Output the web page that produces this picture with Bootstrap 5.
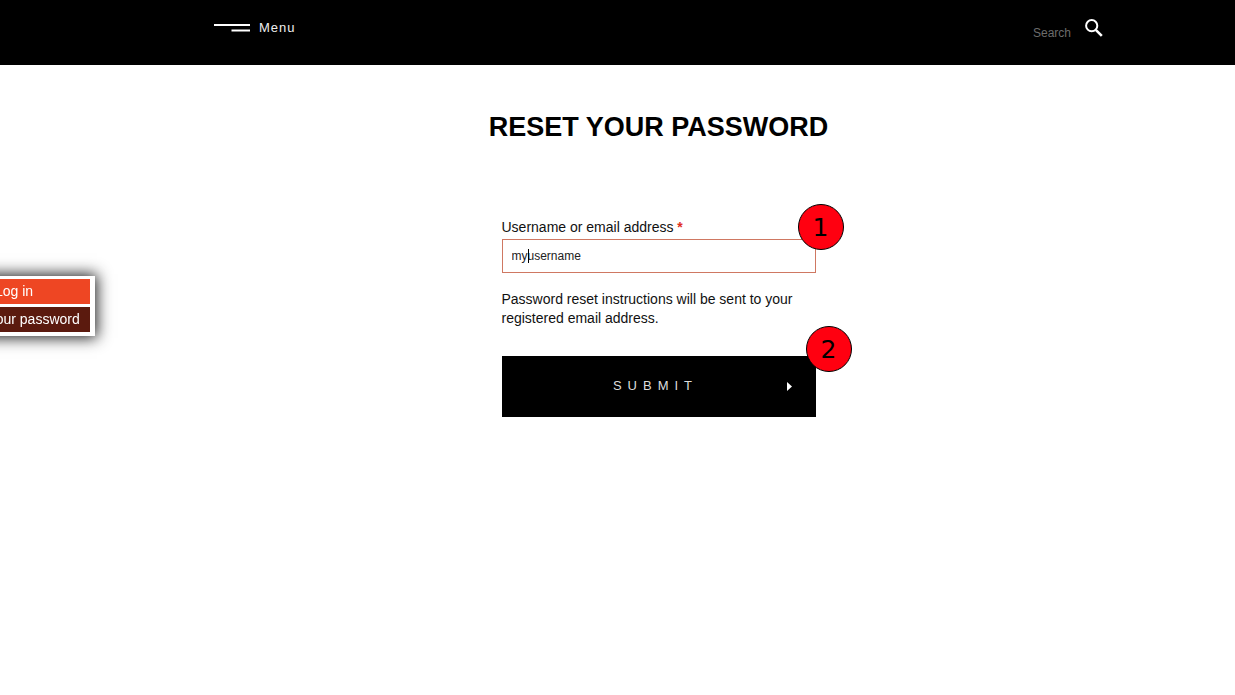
<!DOCTYPE html>
<html lang="en">
<head>
<meta charset="utf-8">
<meta name="viewport" content="width=device-width, initial-scale=1">
<title>Reset your password</title>
<link href="https://cdn.jsdelivr.net/npm/bootstrap@5.3.0/dist/css/bootstrap.min.css" rel="stylesheet">
<style>
  body { font-family: "Liberation Sans", Arial, sans-serif; font-size: 14px; line-height: 19px; color: #111; background: #fff; }
  .site-header, .page-main { padding-left: 82px; }
  .site-header { background: #000; height: 65px; }
  .header-inner { max-width: 889px; height: 56px; }
  .menu-btn { color: #eee; font-size: 13px; line-height: 16px; letter-spacing: 1px; }
  .search-input { width: 40px; font-size: 12px; line-height: 16px; color: #fff; }
  .search-input::placeholder { color: #6c6c6c; opacity: 1; }
  .search-box { padding-top: 4px; }
  .search-form { padding-top: 4px; gap: 12px; }
  .page-title { font-size: 27px; line-height: 32px; font-weight: 700; color: #000; margin: 46px 0 75px; }
  .reset-form { width: 314px; max-width: 100%; }
  .required { color: #e0301e; font-weight: 700; }
  .user-input, .user-input:focus { height: 34px; padding: 0 9px; font-size: 12px; color: #222; border: 1px solid #cf7862; }
  .field-box { margin-top: 2px; }
  .help-text { margin: 17px 0 28px; }
  .caret { left: 26px; top: 10px; width: 1px; height: 14px; background: #000; }
  .submit-btn, .submit-btn:hover { height: 61px; padding: 0 6px 2px 0; background: #000; color: #ddd; font-size: 13px; letter-spacing: 6px; }
  .submit-arrow { right: 24px; top: 26px; }
  .step-badge { width: 46px; height: 46px; border: 1px solid #000; background: #ff0010; color: #000; font: 25px/46px "DejaVu Sans", sans-serif; text-align: center; }
  .step-one { right: -28px; top: -14px; }
  .step-two { right: -36px; top: -30px; }
  .side-tabs { left: -65px; top: 276px; width: 160px; padding: 3px 5px 4px; gap: 3px; background: #fff; box-shadow: 0 0 14px 2px #222; }
  .side-tab { background: #ee4623; color: #fff; line-height: 25px; padding-right: 2px; }
  .side-tab.current { background: #5b1a0e; }
</style>
</head>
<body>
<header class="site-header">
  <div class="header-inner mx-auto d-flex justify-content-between align-items-center">
    <button type="button" class="menu-btn btn p-0 border-0 rounded-0 d-flex align-items-center">
      <svg class="me-2" width="37" height="8" viewBox="0 0 37 8" fill="#fff" aria-hidden="true"><path d="M0 0h36v2H0zM17.500 5.500h18.500v2H17.500z"/></svg>
      <span>Menu</span>
    </button>
    <form class="search-form d-flex align-items-start" role="search">
      <div class="search-box"><input type="text" class="search-input bg-transparent border-0 p-0" placeholder="Search" aria-label="Search"></div>
      <button type="button" class="btn p-0 border-0 d-flex" aria-label="Search">
        <svg width="18" height="18" viewBox="0 0 18 18" fill="none" stroke="#fff" aria-hidden="true"><circle cx="6.700" cy="6.700" r="5.600" stroke-width="2"/><path d="M10.800 10.800l6 6" stroke-width="2.600"/></svg>
      </button>
    </form>
  </div>
</header>

<nav class="side-tabs position-fixed d-flex flex-column text-center text-nowrap" aria-label="Account">
  <a href="#" class="side-tab text-decoration-none">Log in</a>
  <a href="#" class="side-tab current text-decoration-none" aria-current="page">Reset your password</a>
</nav>

<main class="page-main">
  <h1 class="page-title text-center">RESET YOUR PASSWORD</h1>
  <form class="reset-form mx-auto">
    <div class="position-relative">
      <label for="user" class="d-block">Username or email address <span class="required">*</span></label>
      <div class="field-box position-relative">
        <input id="user" type="text" class="user-input form-control rounded-0 shadow-none" value="myusername">
        <span class="caret position-absolute"></span>
      </div>
      <span class="step-badge step-one position-absolute rounded-circle">1</span>
    </div>
    <p class="help-text">Password reset instructions will be sent to your registered email address.</p>
    <div class="position-relative">
      <button type="button" class="submit-btn btn w-100 rounded-0 border-0">SUBMIT</button>
      <svg class="submit-arrow position-absolute" width="5" height="9" viewBox="0 0 5 9" fill="#fff" aria-hidden="true"><path d="M0 0l5 4.500L0 9z"/></svg>
      <span class="step-badge step-two position-absolute rounded-circle">2</span>
    </div>
  </form>
</main>
<script src="https://cdn.jsdelivr.net/npm/bootstrap@5.3.0/dist/js/bootstrap.bundle.min.js"></script>
</body>
</html>
